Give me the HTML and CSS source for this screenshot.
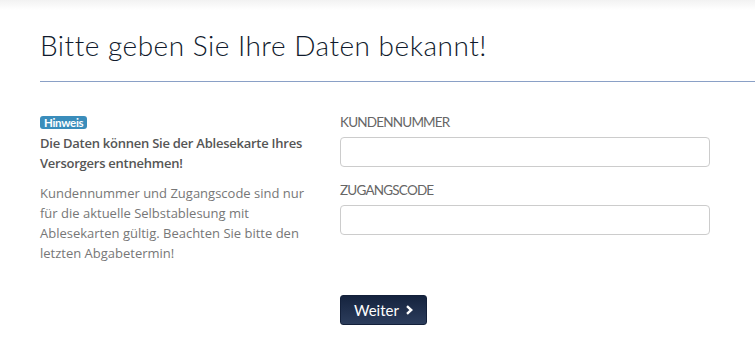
FILE: index.html
```html
<!DOCTYPE html>
<html lang="de">
<head>
<meta charset="UTF-8">
<meta name="viewport" content="width=device-width, initial-scale=1.0">
<title>Selbstablesung - Anmeldung</title>
<link rel="stylesheet" href="styles.css">
</head>
<body>
    <div class="top-shade"></div>
    <div class="page">
        <h1>Bitte geben Sie Ihre Daten bekannt!</h1>
        <hr class="divider">

        <div class="row">
            <!-- Hinweis -->
            <div class="info-col">
                <div class="badge-line"><span class="badge">Hinweis</span></div>
                <p class="info-strong">Die Daten können Sie der Ablesekarte Ihres Versorgers entnehmen!</p>
                <p class="info-text">Kundennummer und Zugangscode sind nur für die aktuelle Selbstablesung mit Ablesekarten gültig. Beachten Sie bitte den letzten Abgabetermin!</p>
            </div>

            <!-- Login -->
            <form class="form-col" onsubmit="return false">
                <div class="field">
                    <label for="kundennummer">KUNDENNUMMER</label>
                    <input type="text" id="kundennummer" name="kundennummer">
                </div>
                <div class="field">
                    <label for="zugangscode">ZUGANGSCODE</label>
                    <input type="text" id="zugangscode" name="zugangscode">
                </div>
                <button type="submit" class="btn-next">Weiter
                    <svg class="chevron" width="9" height="10" viewBox="0 0 9 10"><path d="M2 1.2 L6.2 5 L2 8.8" fill="none" stroke="#fff" stroke-width="2.4"/></svg>
                </button>
            </form>
        </div>
    </div>
</body>
</html>
```

FILE: styles.css
```css
body {
margin: 0;
padding: 0;
background: #ffffff;
font-family: "Open Sans", Arial, sans-serif;
}

.top-shade {
height: 10px;
background: linear-gradient(#f2f2f2, #ffffff);
}

.page {
padding-left: 40px;
}

h1 {
margin: 18px 0 0;
font-family: Lato, "Liberation Sans", sans-serif;
font-weight: 300;
font-size: 28px;
line-height: 34px;
letter-spacing: 0.5px;
color: #101a2c;
}

.divider {
margin: 19px 0 0;
border: none;
border-top: 1px solid #8aa0c6;
height: 0;
}

.row {
display: flex;
gap: 20px;
margin-top: 33px;
width: 670px;
}

.info-col {
width: 280px;
}

.badge-line {
line-height: 13px;
margin-bottom: 4px;
}

.badge {
display: inline-block;
background: #3a8dbb;
color: #ffffff;
font-family: Lato, "Liberation Sans", sans-serif;
font-weight: bold;
font-size: 11.5px;
line-height: 13px;
padding: 0 4px;
border-radius: 3px;
letter-spacing: -0.3px;
}

.info-strong {
margin: 0;
font-size: 13px;
font-weight: 600;
line-height: 20px;
letter-spacing: -0.25px;
color: #555555;
}

.info-text {
margin: 10px 0 0;
font-size: 13px;
line-height: 20px;
color: #777777;
}

.form-col {
width: 370px;
margin: 0;
}

.field {
margin-bottom: 16px;
}

label {
display: block;
font-family: Lato, "Liberation Sans", sans-serif;
font-size: 13.5px;
line-height: 14px;
letter-spacing: -0.8px;
color: #666666;
margin-bottom: 8px;
}

input {
display: block;
box-sizing: border-box;
width: 100%;
height: 30px;
border: 1px solid #cccccc;
border-radius: 4px;
padding: 4px 8px;
font-size: 13px;
}

.btn-next {
display: inline-flex;
align-items: center;
gap: 6px;
margin-top: 44px;
height: 30px;
width: 87px;
padding: 0 0 0 13px;
border: 1px solid #13203a;
border-radius: 3px;
background: linear-gradient(#15233e, #2c3d5c);
color: #ffffff;
font-family: Lato, "Liberation Sans", sans-serif;
font-size: 15px;
cursor: pointer;
}

.btn-next:hover {
background: #2c3d5c;
}
```
